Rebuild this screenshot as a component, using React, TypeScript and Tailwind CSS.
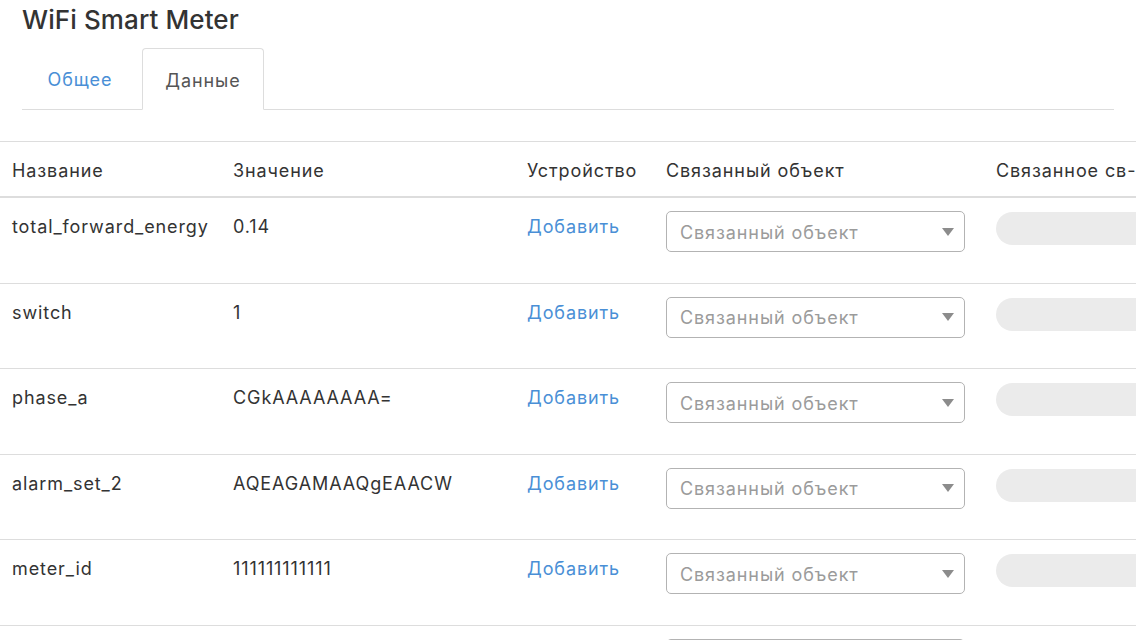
import React from "react";

const rows = [
  { name: "total_forward_energy", value: "0.14" },
  { name: "switch", value: "1" },
  { name: "phase_a", value: "CGkAAAAAAAA=" },
  { name: "alarm_set_2", value: "AQEAGAMAAQgEAACW" },
  { name: "meter_id", value: "111111111111" },
  { name: "", value: "" },
];

const cols = "grid grid-cols-[221px_294px_139px_330px_340px]";

const SelectBox = () => (
  <div className="flex items-center justify-between w-[299px] h-[41px] border border-[#b3b3b3] rounded-[5px] pl-[13px] pr-[10px] bg-white">
    <span className="text-[#9b9b9b] pt-[2px]">Связанный объект</span>
    <svg width="12" height="8" viewBox="0 0 12 8">
      <path d="M0 0 L12 0 L6 8 Z" fill="#8c8c8c" />
    </svg>
  </div>
);

const App = () => {
  return (
    <div
      className="w-[1136px] h-[640px] overflow-hidden bg-white text-[#333] text-[18px] leading-[26px] tracking-[0.9px]"
      style={{ fontFamily: "Inter, \"Liberation Sans\", sans-serif" }}
    >
      <div className="px-[22px]">
        <h1 className="text-[26px] leading-[40px] font-medium tracking-[0.1px] text-[#333]">WiFi Smart Meter</h1>
        <div className="mt-[8px] flex border-b border-[#ddd] h-[62px]">
          <div className="w-[120px] flex items-center justify-center pt-[3px] pr-[4px] text-[#4a8fd6]">Общее</div>
          <div className="w-[122px] flex items-center justify-center pt-[3px] border border-[#ddd] border-b-white rounded-t-[4px] -mb-px bg-white text-[#555]">
            Данные
          </div>
        </div>
      </div>
      <div className="mt-[31px] w-[1324px] border-t border-[#ddd]">
        <div className={`${cols} h-[56px] pt-[3px] border-b-2 border-[#ddd] items-center`}>
          <div className="px-[12px]">Название</div>
          <div className="px-[12px]">Значение</div>
          <div className="px-[12px]">Устройство</div>
          <div className="px-[12px]">Связанный объект</div>
          <div className="px-[12px] whitespace-nowrap">Связанное св-во</div>
        </div>
        {rows.map((r, i) => (
          <div key={i} className={`${cols} h-[85.5px] border-b border-[#ddd]`}>
            <div className="px-[12px] pt-[16px]">{r.name}</div>
            <div className="px-[12px] pt-[16px]">{r.value}</div>
            <div className="px-[12px] pt-[16px] text-[#4a8fd6]">{r.name ? "Добавить" : ""}</div>
            <div className="px-[12px] pt-[13px]">
              <SelectBox />
            </div>
            <div className="px-[12px] pt-[14px]">
              <div className="h-[33px] w-[300px] rounded-full bg-[#ebebeb]" />
            </div>
          </div>
        ))}
      </div>
    </div>
  );
};

export default App;
